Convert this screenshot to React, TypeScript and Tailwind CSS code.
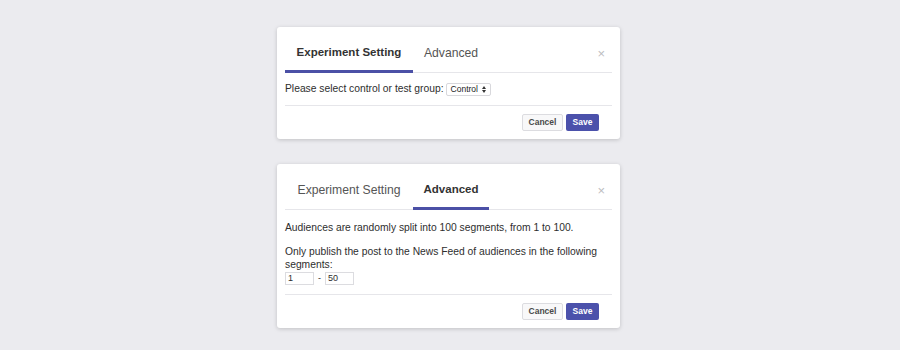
import React from "react";

const font = { fontFamily: '"Liberation Sans", Arial, sans-serif' };

type TabsProps = { active: number };

const tabs = [
  { label: "Experiment Setting", width: "w-[128px]" },
  { label: "Advanced", width: "w-[76px]" },
];

const Tabs = ({ active }: TabsProps) => (
  <div className="flex items-stretch h-[46px] border-b border-[#e6e6ea]">
    {tabs.map((t, i) => (
      <div
        key={t.label}
        className={
          i === active
            ? `${t.width} flex items-center justify-center pt-[9px] -mb-px border-b-[3px] border-[#4b50a6] text-[11.5px] font-bold text-[#333]`
            : `${t.width} flex items-center justify-center pt-[9px] -mb-px border-b-[3px] border-transparent text-[12.2px] text-[#555]`
        }
      >
        {t.label}
      </div>
    ))}
    <div className="ml-auto mr-[7px] flex items-center pt-[8px] text-[13px] text-[#bdbdc1]">
      ×
    </div>
  </div>
);

const Footer = () => (
  <div className="flex justify-end gap-[3px] pt-[8px] pb-[8px] pr-[13px] border-t border-[#e6e6ea]">
    <button className="h-[17px] w-[41px] rounded-[2px] border border-[#dcdce0] bg-[#f8f8f9] text-[8.5px] font-bold text-[#4a4a4a]">
      Cancel
    </button>
    <button className="h-[17px] w-[33px] rounded-[2px] bg-[#4b51ab] text-[8.5px] font-bold text-white">
      Save
    </button>
  </div>
);

export default function App() {
  return (
    <div
      className="w-[900px] h-[350px] bg-[#ebebef] flex flex-col items-center pt-[27px] gap-[25px]"
      style={font}
    >
      <div className="w-[343px] -ml-[3px] rounded-[3px] bg-white px-2 shadow-[0_1px_4px_rgba(0,0,0,0.18)]">
        <Tabs active={0} />
        <div className="h-[32px] flex items-center text-[10.3px] text-[#2e2e2e]">
          Please select control or test group:
          <span className="ml-[2px] flex items-center gap-[4px] h-[13px] px-[4px] rounded-[2px] border border-[#d8d8dc] bg-white text-[8.5px] text-[#222]">
            Control
            <svg width="4" height="7" viewBox="0 0 4 7">
              <path d="M0 3 L2 0 L4 3 Z M0 4 L2 7 L4 4 Z" fill="#333" />
            </svg>
          </span>
        </div>
        <Footer />
      </div>

      <div className="w-[343px] -ml-[3px] rounded-[3px] bg-white px-2 shadow-[0_1px_4px_rgba(0,0,0,0.18)]">
        <Tabs active={1} />
        <div className="pt-[11px] pb-[9px] text-[10.3px] leading-[13px] text-[#2e2e2e]">
          <p>Audiences are randomly split into 100 segments, from 1 to 100.</p>
          <p className="mt-[11px]">
            Only publish the post to the News Feed of audiences in the following segments:
          </p>
          <div className="mt-[1px] flex items-center gap-[4px]">
            <div className="h-[13px] w-[29px] border border-[#dcdce0] px-[2px] text-[9px] leading-[11px]">
              1
            </div>
            <span className="text-[9px]">-</span>
            <div className="h-[13px] w-[29px] border border-[#dcdce0] px-[2px] text-[9px] leading-[11px]">
              50
            </div>
          </div>
        </div>
        <Footer />
      </div>
    </div>
  );
}
